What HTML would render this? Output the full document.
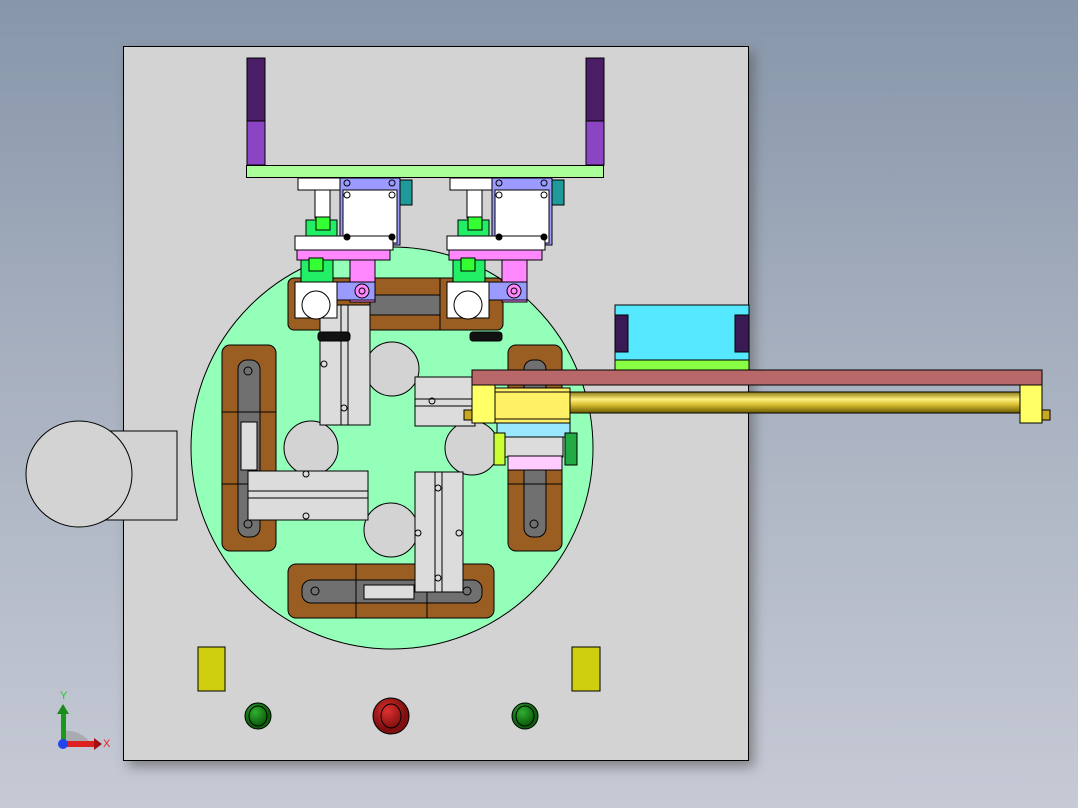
<!DOCTYPE html>
<html><head><style>
html,body{margin:0;padding:0;overflow:hidden}
body{width:1078px;height:808px;background:linear-gradient(180deg,#8796aa 0%,#a7b0bf 45%,#c6cad5 100%);font-family:"Liberation Sans",sans-serif}
svg{display:block}
</style></head><body>
<svg width="1078" height="808" viewBox="0 0 1078 808" xmlns="http://www.w3.org/2000/svg" stroke="#000" stroke-width="1">
<defs>
<linearGradient id="rod" x1="0" y1="0" x2="0" y2="1"><stop offset="0" stop-color="#8a7a10"/><stop offset=".35" stop-color="#fff080"/><stop offset=".6" stop-color="#d8c030"/><stop offset="1" stop-color="#6a5a00"/></linearGradient>
<radialGradient id="rb" cx=".4" cy=".35"><stop offset="0" stop-color="#e03030"/><stop offset="1" stop-color="#801010"/></radialGradient>
<radialGradient id="gb" cx=".4" cy=".35"><stop offset="0" stop-color="#30b030"/><stop offset="1" stop-color="#0c600c"/></radialGradient>
<filter id="sh" x="-10%" y="-10%" width="120%" height="120%"><feGaussianBlur stdDeviation="6"/></filter>
</defs>
<rect x="128" y="52" width="626" height="715" fill="#555" stroke="none" filter="url(#sh)" opacity=".6"/>
<!-- plate -->
<rect x="123.5" y="46.5" width="625" height="714" fill="#d3d3d3"/>
<!-- left cylinder -->
<rect x="98" y="431" width="79" height="89" fill="#d3d3d3"/>
<circle cx="79" cy="474" r="53" fill="#d3d3d3"/>
<!-- rotary table -->
<circle cx="392" cy="448" r="201" fill="#93ffb9"/>
<!-- purple posts -->
<rect x="247" y="58" width="18" height="63" fill="#4a1e66"/><rect x="247" y="121" width="18" height="44" fill="#8b44c4"/>
<rect x="586" y="58" width="18" height="63" fill="#4a1e66"/><rect x="586" y="121" width="18" height="44" fill="#8b44c4"/>
<rect x="246.5" y="165.5" width="357" height="12" fill="#aaff99"/>
<!-- brown blocks -->
<rect x="288" y="278" width="215" height="52" rx="6" fill="#9a5e22"/>
<rect x="370" y="295" width="70" height="20" fill="#707070"/>
<rect x="222" y="345" width="54" height="206" rx="8" fill="#9a5e22"/>
<rect x="238" y="360" width="22" height="177" rx="9" fill="#707070"/>
<rect x="241" y="422" width="16" height="48" fill="#ddd"/>
<rect x="508" y="345" width="54" height="206" rx="8" fill="#9a5e22"/>
<rect x="524" y="360" width="22" height="177" rx="9" fill="#707070"/>
<rect x="288" y="564" width="206" height="54" rx="8" fill="#9a5e22"/>
<rect x="302" y="580" width="180" height="23" rx="9" fill="#707070"/>
<rect x="364" y="585" width="50" height="14" fill="#ddd"/>
<line x1="222" y1="412" x2="276" y2="412"/><line x1="222" y1="484" x2="276" y2="484"/>
<line x1="356" y1="564" x2="356" y2="618"/><line x1="427" y1="564" x2="427" y2="618"/>
<line x1="508" y1="412" x2="562" y2="412"/><line x1="508" y1="484" x2="562" y2="484"/>
<line x1="370" y1="278" x2="370" y2="330"/><line x1="440" y1="278" x2="440" y2="330"/>
<!-- gray circles -->
<circle cx="392" cy="369" r="27" fill="#d3d3d3"/>
<circle cx="311" cy="448" r="27" fill="#d3d3d3"/>
<circle cx="472" cy="448" r="27" fill="#d3d3d3"/>
<circle cx="391" cy="530" r="27" fill="#d3d3d3"/>
<!-- slide bars -->
<rect x="320" y="305" width="50" height="120" fill="#dcdcdc"/><line x1="341" y1="305" x2="341" y2="425"/><line x1="348" y1="305" x2="348" y2="425"/>
<rect x="248" y="471" width="120" height="49" fill="#dcdcdc"/><line x1="248" y1="491" x2="368" y2="491"/><line x1="248" y1="498" x2="368" y2="498"/>
<rect x="415" y="472" width="48" height="120" fill="#dcdcdc"/><line x1="435" y1="472" x2="435" y2="592"/><line x1="442" y1="472" x2="442" y2="592"/>
<rect x="415" y="377" width="60" height="49" fill="#dcdcdc"/><line x1="415" y1="399" x2="475" y2="399"/><line x1="415" y1="406" x2="475" y2="406"/>
<g fill="none"><circle cx="324" cy="364" r="3"/><circle cx="344" cy="408" r="3"/><circle cx="306" cy="474" r="3"/><circle cx="306" cy="516" r="3"/><circle cx="438" cy="488" r="3"/><circle cx="438" cy="578" r="3"/><circle cx="418" cy="533" r="3"/><circle cx="459" cy="533" r="3"/><circle cx="432" cy="401" r="3"/><circle cx="248" cy="371" r="4"/><circle cx="248" cy="524" r="4"/><circle cx="534" cy="524" r="4"/><circle cx="315" cy="591" r="4"/><circle cx="467" cy="591" r="4"/></g>
<!-- modules -->
<g id="m">
<rect x="298" y="178" width="42" height="12" fill="#fff"/>
<rect x="340" y="178" width="60" height="67" fill="#9b9bff"/>
<rect x="343" y="190" width="54" height="53" fill="#fff"/>
<rect x="400" y="180" width="12" height="25" fill="#1f9999"/>
<rect x="315" y="190" width="15" height="28" fill="#fff"/>
<rect x="306" y="220" width="31" height="18" fill="#22ee66"/><rect x="316" y="217" width="14" height="13" fill="#33ff33"/>
<rect x="295" y="236" width="98" height="14" fill="#fff"/>
<rect x="297" y="250" width="93" height="10" fill="#ff88ff"/>
<rect x="350" y="260" width="25" height="42" fill="#ff88ff"/>
<rect x="301" y="260" width="32" height="22" fill="#22ee66"/><rect x="309" y="258" width="14" height="13" fill="#33ff33"/>
<rect x="337" y="282" width="38" height="18" fill="#9b9bff"/>
<circle cx="362" cy="291" r="7" fill="#ff88ff"/><circle cx="362" cy="291" r="3" fill="none"/>
<rect x="295" y="282" width="42" height="36" fill="#fff"/>
<circle cx="316" cy="305" r="14" fill="#fff"/>
<rect x="318" y="332" width="32" height="9" rx="3" fill="#111"/>
<g fill="none"><circle cx="347" cy="183" r="3"/><circle cx="392" cy="183" r="3"/><circle cx="347" cy="195" r="3"/><circle cx="392" cy="195" r="3"/><circle cx="347" cy="237" r="3" fill="#000"/><circle cx="392" cy="237" r="3" fill="#000"/></g>
</g>
<use href="#m" x="152"/>
<!-- right feeder -->
<rect x="615" y="305" width="134" height="55" fill="#55e8ff"/>
<rect x="615" y="315" width="13" height="37" fill="#3a1a55"/><rect x="735" y="315" width="14" height="37" fill="#3a1a55"/>
<rect x="615" y="360" width="134" height="12" fill="#88ff44"/>
<rect x="472" y="370" width="570" height="15" fill="#b86868"/>
<rect x="570" y="392" width="452" height="21" fill="url(#rod)"/>
<rect x="497" y="423" width="73" height="14" fill="#99e8ff"/>
<rect x="494" y="433" width="11" height="32" fill="#ccff33"/>
<rect x="565" y="433" width="12" height="32" fill="#22aa44"/>
<rect x="505" y="437" width="58" height="20" fill="#dcdcdc"/>
<rect x="508" y="456" width="54" height="14" fill="#ffccff"/>
<rect x="472" y="385" width="23" height="38" fill="#ffff66"/>
<rect x="495" y="388" width="75" height="35" fill="#fff066"/><line x1="495" y1="392" x2="570" y2="392"/><line x1="495" y1="419" x2="570" y2="419"/>
<rect x="1020" y="385" width="22" height="38" fill="#ffff66"/>
<rect x="464" y="410" width="8" height="10" fill="#c8a820"/><rect x="1042" y="410" width="8" height="10" fill="#c8a820"/>
<!-- yellow tags -->
<rect x="198" y="647" width="27" height="44" fill="#cfcf10"/>
<rect x="572" y="647" width="28" height="44" fill="#cfcf10"/>
<!-- buttons -->
<circle cx="258" cy="716" r="13" fill="url(#gb)"/><ellipse cx="258" cy="716" rx="9" ry="10" fill="none"/>
<circle cx="391" cy="716" r="18" fill="url(#rb)"/><ellipse cx="391" cy="716" rx="10" ry="12" fill="none"/>
<circle cx="525" cy="716" r="13" fill="url(#gb)"/><ellipse cx="525" cy="716" rx="9" ry="10" fill="none"/>
<!-- axis triad -->
<g stroke="none">
<path d="M63 731 A30 30 0 0 1 92 745 L63 745Z" fill="#999" opacity=".6"/>
<rect x="61" y="712" width="5" height="33" fill="#1a9a1a"/><path d="M57 714 L63 704 L69 714Z" fill="#1a8a1a"/>
<rect x="63" y="741" width="32" height="6" fill="#dd2020"/><path d="M94 738 L102 744 L94 750Z" fill="#a01010"/>
<circle cx="63" cy="744" r="5" fill="#2244ee"/>
</g>
<text x="60" y="699" font-size="11" fill="#22cc22" stroke="none">Y</text>
<text x="103" y="747" font-size="11" fill="#ee2222" stroke="none">X</text>
</svg>
</body></html>
